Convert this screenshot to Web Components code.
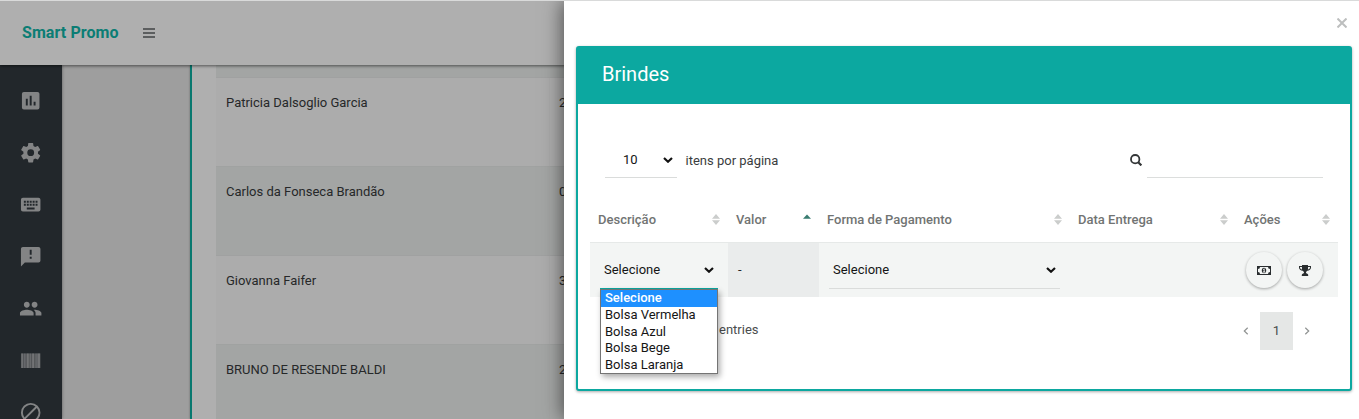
<!DOCTYPE html>
<html lang="pt-BR">
<head>
<meta charset="utf-8">
<title>Smart Promo</title>
<style>
body{margin:0;background:#9e9e9e;font:13px/18px Roboto,sans-serif;color:#262829;overflow:hidden}
</style>
</head>
<body>
<smart-app></smart-app>
<script>
function define(name, html) {
  const t = document.createElement('template');
  t.innerHTML = html;
  customElements.define(name, class extends HTMLElement {
    constructor() {
      super();
      this.attachShadow({mode: 'open'}).append(t.content.cloneNode(true));
    }
  });
}

const icons = {
  chart: ['0 0 24 24', '<path d="M19 3H5a2 2 0 0 0-2 2v14a2 2 0 0 0 2 2h14a2 2 0 0 0 2-2V5a2 2 0 0 0-2-2zM9 17H7v-7h2v7zm4 0h-2V7h2v10zm4 0h-2v-4h2v4z"/>'],
  gear: ['0 0 24 24', '<path d="M19.43 12.98c.04-.32.07-.64.07-.98s-.03-.66-.07-.98l2.11-1.65c.19-.15.24-.42.12-.64l-2-3.46c-.12-.22-.39-.3-.61-.22l-2.49 1c-.52-.4-1.08-.73-1.69-.98l-.38-2.65A.49.49 0 0 0 14 2h-4c-.25 0-.46.18-.49.42l-.38 2.65c-.61.25-1.17.59-1.69.98l-2.49-1c-.23-.09-.49 0-.61.22l-2 3.46c-.13.22-.07.49.12.64l2.11 1.65c-.04.32-.07.65-.07.98s.03.66.07.98l-2.11 1.65c-.19.15-.24.42-.12.64l2 3.46c.12.22.39.3.61.22l2.49-1c.52.4 1.08.73 1.69.98l.38 2.65c.03.24.24.42.49.42h4c.25 0 .46-.18.49-.42l.38-2.65c.61-.25 1.17-.59 1.69-.98l2.49 1c.23.09.49 0 .61-.22l2-3.46c.12-.22.07-.49-.12-.64l-2.11-1.65zM12 15.5a3.5 3.5 0 1 1 0-7 3.5 3.5 0 0 1 0 7z"/>'],
  keyboard: ['0 0 24 24', '<path d="M20 5H4c-1.1 0-1.99.9-1.99 2L2 17c0 1.1.9 2 2 2h16c1.1 0 2-.9 2-2V7c0-1.1-.9-2-2-2zm-9 3h2v2h-2V8zm0 3h2v2h-2v-2zM8 8h2v2H8V8zm0 3h2v2H8v-2zm-1 2H5v-2h2v2zm0-3H5V8h2v2zm9 7H8v-2h8v2zm0-4h-2v-2h2v2zm0-3h-2V8h2v2zm3 3h-2v-2h2v2zm0-3h-2V8h2v2z"/>'],
  feedback: ['0 0 24 24', '<path d="M20 2H4c-1.1 0-1.99.9-1.99 2L2 22l4-4h14c1.1 0 2-.9 2-2V4c0-1.1-.9-2-2-2zm-7 12h-2v-2h2v2zm0-4h-2V5h2v5z"/>'],
  people: ['0 0 24 24', '<path d="M16 11c1.66 0 2.99-1.34 2.99-3S17.66 5 16 5s-3 1.34-3 3 1.34 3 3 3zm-8 0c1.66 0 2.99-1.34 2.99-3S9.66 5 8 5 5 6.34 5 8s1.34 3 3 3zm0 2c-2.33 0-7 1.17-7 3.5V19h14v-2.5C15 14.17 10.33 13 8 13zm8 0c-.29 0-.62.02-.97.05C16.19 13.89 17 15.02 17 16.5V19h6v-2.5c0-2.33-4.67-3.5-7-3.5z"/>'],
  barcode: ['0 0 24 24', '<path opacity=".5" d="M2 4.5h20v15H2z"/><path opacity=".65" d="M2.5 4.5H4v15H2.500zM5.500 4.500h1v15h-1zM8 4.500h2v15H8zM11 4.500h1v15h-1zM13.500 4.500h2v15h-2zM17 4.500h1v15h-1zM19 4.500h2.500v15H19z"/>'],
  block: ['0 0 24 24', '<path d="M12 2a10 10 0 1 0 0 20 10 10 0 0 0 0-20zM4 12a8 8 0 0 1 12.900-6.310L5.690 16.900A7.900 7.900 0 0 1 4 12zm8 8a7.900 7.900 0 0 1-4.900-1.690L18.310 7.100A8 8 0 0 1 12 20z"/>'],
  menu: ['0 0 12 10', '<path d="M0 0h12v2H0zM0 4h12v2H0zM0 8h12v2H0z"/>'],
  close: ['0 0 10 10', '<path d="M.5.5l9 9M9.500.5l-9 9" fill="none" stroke="currentColor" stroke-width="2"/>'],
  down: ['0 0 10 6', '<path d="M1 1l4 3.700L9 1" fill="none" stroke="#111" stroke-width="2.200"/>'],
  search: ['0 0 12 12', '<circle cx="5.200" cy="5.200" r="4.200" fill="none" stroke="currentColor" stroke-width="1.800"/><path d="M8.200 8.200l3.200 3.200" stroke="currentColor" stroke-width="2.200"/>'],
  money: ['0 0 14 9', '<path fill-rule="evenodd" d="M0 0h14v9H0zM3 1a2 2 0 0 1-2 2v3a2 2 0 0 1 2 2h8a2 2 0 0 1 2-2V3a2 2 0 0 1-2-2z"/><ellipse cx="7" cy="4.500" rx="2.200" ry="2.700"/><path d="M6.100 3.200L7 2.600h.6v3H8.200v.8H5.900v-.8h.8V3.700l-.5.200z" fill="#f3f5f4"/>'],
  trophy: ['0 0 12 11', '<path d="M3 0h6v1h3v1.500C12 4.300 10.300 5.600 8.300 5.700 7.800 6.400 7 6.700 7 7.500c0 .8.600 1 1.300 1.200.6.200.9.600.9 1.300v.9H2.800V10c0-.7.300-1.100.9-1.300C4.400 8.500 5 8.300 5 7.500c0-.8-.8-1.100-1.300-1.800C1.700 5.600 0 4.300 0 2.500V1h3zM1 2v.5c0 .9.900 1.700 2 2C2.900 3.800 2.900 3 3 2zm10 0H9c.1 1 .1 1.800-.1 2.500 1.200-.3 2.100-1.100 2.100-2z"/>'],
  left: ['0 0 6 8', '<path d="M4.700.7L1.300 4l3.400 3.300" fill="none" stroke="currentColor" stroke-width="1.200"/>'],
  right: ['0 0 6 8', '<path d="M1.300.7L4.700 4 1.300 7.300" fill="none" stroke="currentColor" stroke-width="1.200"/>'],
  sort: ['0 0 8 11', '<path d="M4 0l4 4.800H0zM4 11L0 6.200h8z"/>'],
  asc: ['0 0 8 11', '<path d="M4 .5L8 4.700H0z"/>']
};
customElements.define('app-icon', class extends HTMLElement {
  constructor() {
    super();
    this.attachShadow({mode: 'open'});
  }
  connectedCallback() {
    const [box, body] = icons[this.getAttribute('name')];
    this.shadowRoot.innerHTML = `<style>:host{display:block;flex:none}svg{display:block;width:100%;height:100%;fill:currentColor}</style><svg viewBox="${box}">${body}</svg>`;
  }
});

define('side-nav', `<style>
:host{display:flex;flex-direction:column;align-items:center;gap:28.6px;width:62px;padding-top:23.8px;padding-right:1.4px;box-sizing:border-box;background:#22272b;color:#838485;box-shadow:0 0 3px #0006;flex:none;overflow:hidden}
app-icon{width:23.4px;height:23.4px}</style>
<app-icon name="chart"></app-icon><app-icon name="gear"></app-icon><app-icon name="keyboard"></app-icon><app-icon name="feedback"></app-icon><app-icon name="people"></app-icon><app-icon name="barcode"></app-icon><app-icon name="block"></app-icon>`);

define('top-bar', `<style>
:host{display:flex;align-items:center;gap:24px;height:64px;padding-left:22px;background:#afafaf;box-shadow:0 1px 3px #0008;position:relative;z-index:1;flex:none}
b{font-size:16px;font-weight:700;letter-spacing:.08px;color:#0b7d74}
app-icon{width:12px;height:10px;color:#5c5e5f}</style>
<b>Smart Promo</b><app-icon name="menu"></app-icon>`);

define('person-row', `<style>
:host{display:grid;grid-template-columns:333px 1fr;height:89px;box-sizing:border-box;border-top:1px solid #a0a1a1;background:#acacac}
:host([odd]){background:#a3a5a4;border-color:#a0a2a1}
div{padding:15.5px 10px}
div+div{border-left:1px solid #9e9f9f44;padding-left:9px;background:#ffffff08}</style>
<div><slot></slot></div><div><slot name="num"></slot></div>`);

define('people-list', `<style>
:host{display:block;flex:1;margin-left:128px;border-left:2px solid #08786f;background:#afafaf;padding-left:24px;height:354px;overflow:hidden;box-shadow:0 0 2px #0005}
.tail{height:12px;background:#a3a5a4}</style>
<div class="tail"></div>
<person-row>Patricia Dalsoglio Garcia<span slot="num">2</span></person-row>
<person-row odd>Carlos da Fonseca Brandão<span slot="num">0</span></person-row>
<person-row>Giovanna Faifer<span slot="num">3</span></person-row>
<person-row odd>BRUNO DE RESENDE BALDI<span slot="num">2</span></person-row>`);

define('line-select', `<style>
:host{display:flex;align-items:center;justify-content:space-between;height:36px;box-sizing:border-box;border-bottom:1px solid #dadcdb;padding:0 4px;color:#151515}
app-icon{width:10px;height:6px}</style>
<span><slot></slot></span><app-icon name="down"></app-icon>`);

define('option-list', `<style>
:host{display:block;box-sizing:border-box;border:1px solid #747474;background:#fff;color:#151515;box-shadow:2px 3px 6px #0005}
::slotted(div){height:16.5px;line-height:16.5px;padding-left:4px}
::slotted(.on){background:#1e90ff;color:#fff;font-weight:500;height:17px;line-height:16px}</style><slot></slot>`);

define('col-head', `<style>
:host{display:flex;align-items:center;justify-content:space-between;padding:1px 8px 0;font-weight:500;color:#717473}
app-icon{width:8px;height:11px;color:#cbcdcc}</style>
<span><slot></slot></span><slot name="icon"><app-icon name="sort"></app-icon></slot>`);

define('round-button', `<style>
:host{display:flex;align-items:center;justify-content:center;width:36px;height:36px;border-radius:50%;background:#f3f5f4;color:#292d2f;box-shadow:0 1px 3px #0005}</style><slot></slot>`);

define('gift-table', `<style>
:host{display:block;margin:0 12px}
.row{display:grid;grid-template-columns:138px 91px 251px 166px 102px}
.head{height:46px;border-bottom:1px solid #e6e9e8}
.body{height:54px;background:#f3f5f4}
.pick{padding:10px 10px 0;position:relative}
.pick line-select{padding-bottom:2px}
.val{background:#eaecec;padding:18px 10px}
.acts{display:flex;gap:5px;padding:9px 0 0 10px}
option-list{position:absolute;left:10px;top:46px;width:118px;z-index:2}
.money{width:14px;height:9px}.cup{width:12px;height:11px}</style>
<div class="row head"><col-head>Descrição</col-head><col-head>Valor<app-icon name="asc" slot="icon" style="width:8px;height:11px;color:#397c70"></app-icon></col-head><col-head>Forma de Pagamento</col-head><col-head>Data Entrega</col-head><col-head>Ações</col-head></div>
<div class="row body">
<div class="pick"><line-select style="border-color:#0ca8a0">Selecione</line-select>
<option-list><div class="on">Selecione</div><div>Bolsa Vermelha</div><div>Bolsa Azul</div><div>Bolsa Bege</div><div>Bolsa Laranja</div></option-list></div>
<div class="val">-</div>
<div class="pick"><line-select>Selecione</line-select></div>
<div></div>
<div class="acts"><round-button><app-icon class="money" name="money"></app-icon></round-button><round-button><app-icon class="cup" name="trophy"></app-icon></round-button></div>
</div>`);

define('table-tools', `<style>
:host{display:flex;align-items:flex-end;height:74px;padding:0 27px;color:#3a3d3e}
line-select{width:72px;padding-left:18px}
.lbl{margin-left:8.5px;line-height:34px;flex:1}
app-icon{width:12px;height:12px;margin:0 5px 12px 0;color:#333637}
.field{width:176px;height:36px;box-sizing:border-box;border-bottom:1px solid #dcdedd}</style>
<line-select>10</line-select><span class="lbl">itens por página</span><app-icon name="search"></app-icon><div class="field"></div>`);

define('table-pager', `<style>
:host{display:flex;align-items:center;justify-content:space-between;height:38px;margin:15px 40px 0 141px;color:#4a4d4e}
nav{display:flex;align-items:center;gap:11px}
.txt{padding-bottom:3px}
.num{width:33px;line-height:38px;background:#e5e7e6;text-align:center}
app-icon{width:6px;height:8px;color:#909392}</style>
<span class="txt">entries</span><nav><app-icon name="left"></app-icon><span class="num">1</span><app-icon name="right"></app-icon></nav>`);

define('gift-card', `<style>
:host{display:block;height:345px;box-sizing:border-box;border:2px solid #0ca8a0;border-radius:3px;box-shadow:0 1px 3px #0005;background:#fff}
header{height:56px;line-height:52px;padding-left:24px;background:#0ca8a0;color:#fff;font-size:20px}
gift-table{margin-top:18px}</style>
<header><slot></slot></header>
<table-tools></table-tools>
<gift-table></gift-table><table-pager></table-pager>`);

define('side-drawer', `<style>
:host{display:block;position:absolute;left:564px;right:0;top:1px;bottom:0;box-sizing:border-box;background:#fff;box-shadow:-2px 0 18px #0008;z-index:5;padding:0 7px 0 12px}
.bar{height:45px;display:flex;align-items:center;justify-content:flex-end;padding:0 5px 2px 0;box-sizing:border-box}
app-icon{width:10px;height:10px;color:#bdbfbf}</style>
<div class="bar"><app-icon name="close"></app-icon></div><gift-card>Brindes</gift-card>`);

define('smart-app', `<style>
:host{display:flex;flex-direction:column;position:relative;height:419px;overflow:hidden}
.rule{height:1px;background:#d9dada;flex:none;position:relative;z-index:6}
.main{display:flex;height:354px}</style>
<div class="rule"></div><top-bar></top-bar><div class="main"><side-nav></side-nav><people-list></people-list></div><side-drawer></side-drawer>`);
</script>
</body>
</html>
